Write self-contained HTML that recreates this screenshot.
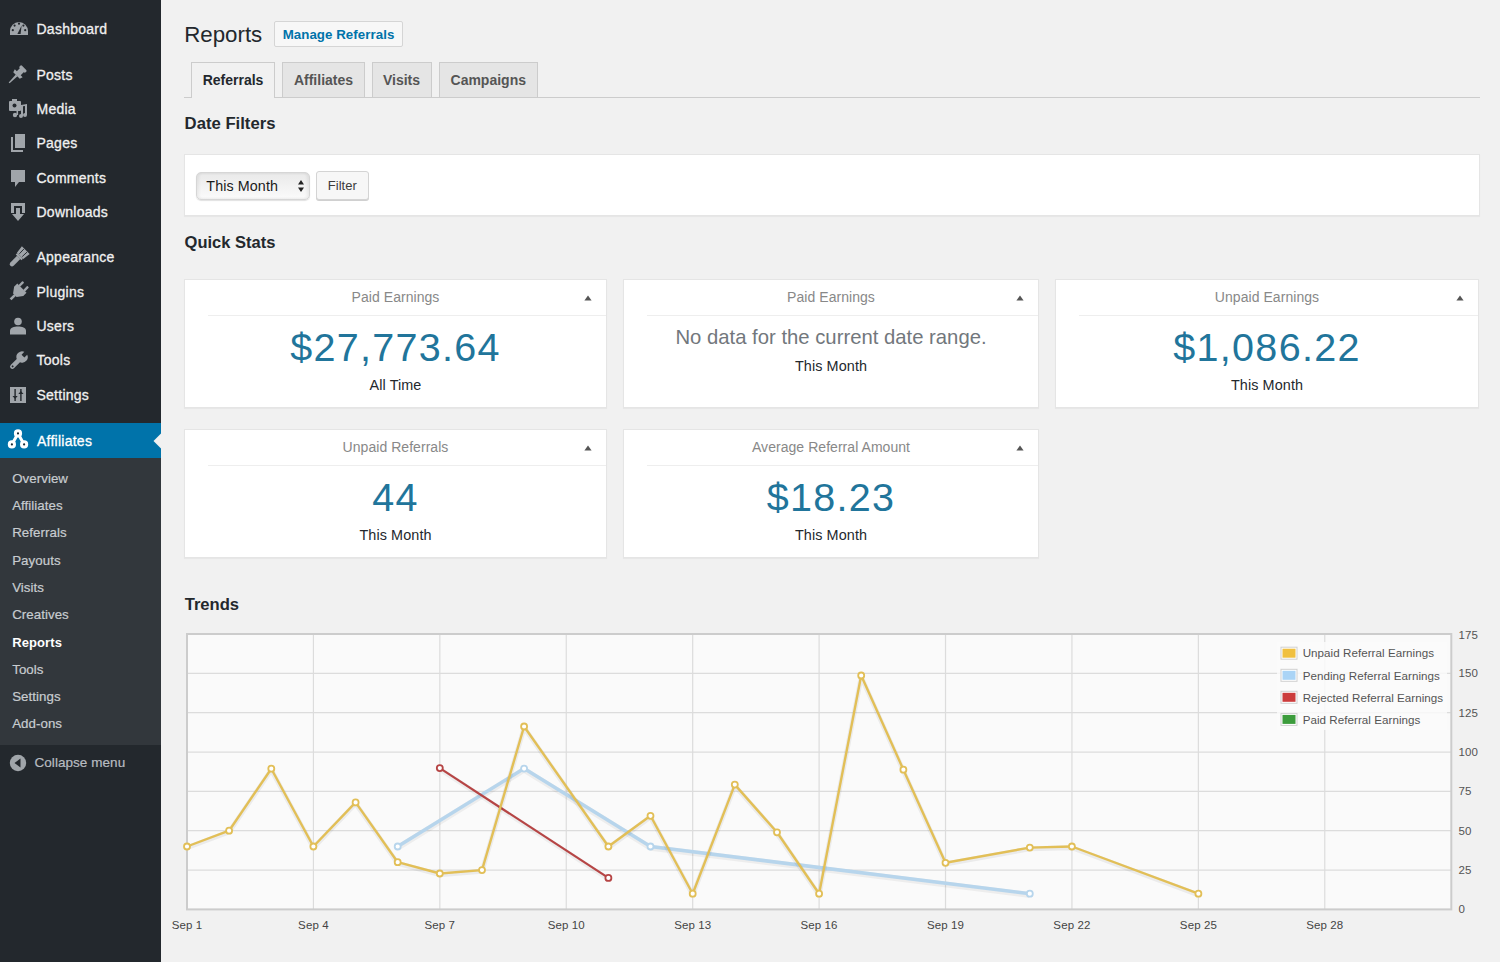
<!DOCTYPE html>
<html><head><meta charset="utf-8"><title>Reports</title>
<style>
html,body{margin:0;padding:0;}
body{width:1500px;height:962px;overflow:hidden;position:relative;background:#f1f1f1;font-family:"Liberation Sans", sans-serif;}
.t{position:absolute;white-space:nowrap;}
.b{position:absolute;}
</style></head><body>
<div class="b" style="left:0px;top:0px;width:161px;height:962px;background:#23282d;"></div>
<div class="b" style="left:0px;top:423px;width:161px;height:35px;background:#0073aa;"></div>
<div class="b" style="left:0px;top:458px;width:161px;height:287px;background:#32373c;"></div>
<div class="t" style="left:36.5px;top:22.1px;font-size:14px;line-height:14px;color:#f0f0f0;letter-spacing:0.25px;-webkit-text-stroke:0.3px #f0f0f0;">Dashboard</div>
<div class="t" style="left:36.5px;top:67.6px;font-size:14px;line-height:14px;color:#f0f0f0;letter-spacing:0.25px;-webkit-text-stroke:0.3px #f0f0f0;">Posts</div>
<div class="t" style="left:36.5px;top:101.9px;font-size:14px;line-height:14px;color:#f0f0f0;letter-spacing:0.25px;-webkit-text-stroke:0.3px #f0f0f0;">Media</div>
<div class="t" style="left:36.5px;top:136.3px;font-size:14px;line-height:14px;color:#f0f0f0;letter-spacing:0.25px;-webkit-text-stroke:0.3px #f0f0f0;">Pages</div>
<div class="t" style="left:36.5px;top:170.6px;font-size:14px;line-height:14px;color:#f0f0f0;letter-spacing:0.25px;-webkit-text-stroke:0.3px #f0f0f0;">Comments</div>
<div class="t" style="left:36.5px;top:204.9px;font-size:14px;line-height:14px;color:#f0f0f0;letter-spacing:0.25px;-webkit-text-stroke:0.3px #f0f0f0;">Downloads</div>
<div class="t" style="left:36.5px;top:250.3px;font-size:14px;line-height:14px;color:#f0f0f0;letter-spacing:0.25px;-webkit-text-stroke:0.3px #f0f0f0;">Appearance</div>
<div class="t" style="left:36.5px;top:284.6px;font-size:14px;line-height:14px;color:#f0f0f0;letter-spacing:0.25px;-webkit-text-stroke:0.3px #f0f0f0;">Plugins</div>
<div class="t" style="left:36.5px;top:318.9px;font-size:14px;line-height:14px;color:#f0f0f0;letter-spacing:0.25px;-webkit-text-stroke:0.3px #f0f0f0;">Users</div>
<div class="t" style="left:36.5px;top:353.2px;font-size:14px;line-height:14px;color:#f0f0f0;letter-spacing:0.25px;-webkit-text-stroke:0.3px #f0f0f0;">Tools</div>
<div class="t" style="left:36.5px;top:387.6px;font-size:14px;line-height:14px;color:#f0f0f0;letter-spacing:0.25px;-webkit-text-stroke:0.3px #f0f0f0;">Settings</div>
<div class="t" style="left:37.0px;top:433.9px;font-size:14px;line-height:14px;color:#ffffff;letter-spacing:0.25px;-webkit-text-stroke:0.3px #fff;">Affiliates</div>
<svg class="b" style="left:4.699999999999999px;top:15px" width="28" height="28" viewBox="-14 -14 28 28"><path d="M-9 6 L-9 2 A9 9 0 0 1 9 2 L9 6 Z" fill="#a0a5aa"/><path d="M-1.6 5 L2.6 -3.5 L1.6 5 Z" fill="#23282d"/><circle cx="-6.2" cy="1.2" r="1.1" fill="#23282d"/><circle cx="-4.4" cy="-3.4" r="1.1" fill="#23282d"/><circle cx="0" cy="-5.3" r="1.1" fill="#23282d"/><circle cx="4.4" cy="-3.4" r="1.1" fill="#23282d"/><circle cx="6.2" cy="1.2" r="1.1" fill="#23282d"/></svg>
<svg class="b" style="left:2.1999999999999993px;top:62.2px" width="28" height="28" viewBox="-14 -14 28 28"><g transform="rotate(45) scale(0.92)"><rect x="-4.6" y="-12.5" width="9.2" height="3.6" rx="1.4" fill="#a0a5aa"/><rect x="-3" y="-10" width="6" height="6.5" fill="#a0a5aa"/><path d="M-6 -4.2 L6 -4.2 L5 -0.8 L-5 -0.8 Z" fill="#a0a5aa"/><path d="M-1.3 -1 L1.3 -1 L0.7 10.5 L-0.7 10.5 Z" fill="#a0a5aa"/></g></svg>
<svg class="b" style="left:4.300000000000001px;top:94px" width="28" height="28" viewBox="-14 -14 28 28"><rect x="-9" y="-7" width="12" height="10" rx="1" fill="#a0a5aa"/><rect x="-6" y="-9" width="5" height="3" fill="#a0a5aa"/><circle cx="-3.5" cy="-2.5" r="2" fill="#23282d"/><path d="M3 -3 L9 -4 L9 7 A2 2 0 1 1 7 5 L7 -2 L5 -1.7 L5 8 A2 2 0 1 1 3 6 Z" fill="#a0a5aa"/><circle cx="-3" cy="7" r="2.2" fill="#a0a5aa"/><rect x="-1.5" y="1" width="1.6" height="6" fill="#a0a5aa"/></svg>
<svg class="b" style="left:3.6000000000000014px;top:129.4px" width="28" height="28" viewBox="-14 -14 28 28"><path d="M-3 -9 L7 -9 L7 5 L-3 5 Z" fill="#a0a5aa"/><path d="M-7 -6 L-5 -6 L-5 7 L5 7 L5 9 L-7 9 Z" fill="#a0a5aa"/></svg>
<svg class="b" style="left:3.8000000000000007px;top:164px" width="28" height="28" viewBox="-14 -14 28 28"><path d="M-7 -8 L7 -8 L7 4 L1 4 L-3 9 L-3 4 L-7 4 Z" fill="#a0a5aa"/></svg>
<svg class="b" style="left:4px;top:198px" width="28" height="28" viewBox="-14 -14 28 28"><path d="M-7 -9 L7 -9 L7 1 L4 1 L4 -6 L-4 -6 L-4 1 L-7 1 Z" fill="#a0a5aa"/><path d="M-2 -4 L2 -4 L2 2 L6 2 L0 9 L-6 2 L-2 2 Z" fill="#a0a5aa"/></svg>
<svg class="b" style="left:4px;top:243.5px" width="28" height="28" viewBox="-14 -14 28 28"><g transform="rotate(45)"><path d="M-5.5 -11 L5.5 -11 L4.5 -3 L-4.5 -3 Z" fill="#a0a5aa"/><path d="M-2.2 -10.5 L-2 -4 M2.2 -10.5 L2 -4" stroke="#23282d" stroke-width="0.9"/><rect x="-4" y="-3" width="8" height="2.2" fill="#a0a5aa"/><path d="M-2.3 -1 L2.3 -1 L2.3 8.5 A2.3 2.3 0 0 1 -2.3 8.5 Z" fill="#a0a5aa"/></g></svg>
<svg class="b" style="left:4px;top:277.5px" width="28" height="28" viewBox="-14 -14 28 28"><g transform="rotate(45)"><rect x="-4.6" y="-11" width="2.4" height="6" rx="0.8" fill="#a0a5aa"/><rect x="2.2" y="-11" width="2.4" height="6" rx="0.8" fill="#a0a5aa"/><path d="M-6.5 -5.5 L6.5 -5.5 L6.5 -1 L2.5 4.5 L-2.5 4.5 L-6.5 -1 Z" fill="#a0a5aa"/><rect x="-1.3" y="4" width="2.6" height="6.5" fill="#a0a5aa"/></g></svg>
<svg class="b" style="left:4px;top:312px" width="28" height="28" viewBox="-14 -14 28 28"><circle cx="0" cy="-4.5" r="3.8" fill="#a0a5aa"/><path d="M-8 8.5 L-8 5 C-8 1.5 -4 0.5 0 0.5 C4 0.5 8 1.5 8 5 L8 8.5 Z" fill="#a0a5aa"/></svg>
<svg class="b" style="left:4px;top:346.5px" width="28" height="28" viewBox="-14 -14 28 28"><g transform="rotate(45)"><path d="M-5.5 -6 A5.5 5.5 0 0 1 -2 -11 L-2 -7 L2 -7 L2 -11 A5.5 5.5 0 0 1 3 -1 L2.3 -0.5 L2.3 8 A2.3 2.3 0 0 1 -2.3 8 L-2.3 -0.5 A5.5 5.5 0 0 1 -5.5 -6 Z" fill="#a0a5aa"/><circle cx="0" cy="7.6" r="1" fill="#23282d"/></g></svg>
<svg class="b" style="left:4px;top:381px" width="28" height="28" viewBox="-14 -14 28 28"><rect x="-8" y="-8" width="16" height="16" fill="#a0a5aa"/><rect x="-3.6" y="-6" width="1.4" height="12" fill="#23282d"/><rect x="2.2" y="-6" width="1.4" height="12" fill="#23282d"/><path d="M-5.5 1 L-0.3 1 L-2.9 4 Z" fill="#23282d"/><path d="M0.3 -1 L5.5 -1 L2.9 -4 Z" fill="#23282d"/></svg>
<svg class="b" style="left:4.199999999999999px;top:425.2px" width="28" height="28" viewBox="-14 -14 28 28"><g fill="none" stroke="#ffffff"><path d="M0 -5.6 L-6.1 5.4 M0 -5.6 L6.1 5.4" stroke-width="3"/><circle cx="0" cy="-5.6" r="2.6" stroke-width="3" fill="#1a2a35"/><circle cx="-6.1" cy="5.4" r="2.6" stroke-width="3" fill="#1a2a35"/><circle cx="6.1" cy="5.4" r="2.6" stroke-width="3" fill="#1a2a35"/></g></svg>
<svg class="b" style="left:152px;top:431px" width="10" height="20" viewBox="0 0 10 20"><path d="M10 1.5 L1.5 10 L10 18.5 Z" fill="#f1f1f1"/></svg>
<div class="t" style="left:12.2px;top:471.7px;font-size:13.3px;line-height:13.3px;color:#c8ccd0;letter-spacing:0.05px;-webkit-text-stroke:0.2px #c8ccd0;">Overview</div>
<div class="t" style="left:12.2px;top:499.0px;font-size:13.3px;line-height:13.3px;color:#c8ccd0;letter-spacing:0.05px;-webkit-text-stroke:0.2px #c8ccd0;">Affiliates</div>
<div class="t" style="left:12.2px;top:526.3px;font-size:13.3px;line-height:13.3px;color:#c8ccd0;letter-spacing:0.05px;-webkit-text-stroke:0.2px #c8ccd0;">Referrals</div>
<div class="t" style="left:12.2px;top:553.6px;font-size:13.3px;line-height:13.3px;color:#c8ccd0;letter-spacing:0.05px;-webkit-text-stroke:0.2px #c8ccd0;">Payouts</div>
<div class="t" style="left:12.2px;top:580.8px;font-size:13.3px;line-height:13.3px;color:#c8ccd0;letter-spacing:0.05px;-webkit-text-stroke:0.2px #c8ccd0;">Visits</div>
<div class="t" style="left:12.2px;top:608.1px;font-size:13.3px;line-height:13.3px;color:#c8ccd0;letter-spacing:0.05px;-webkit-text-stroke:0.2px #c8ccd0;">Creatives</div>
<div class="t" style="left:12.2px;top:635.6px;font-size:13px;line-height:13px;color:#ffffff;font-weight:700;letter-spacing:0.1px;">Reports</div>
<div class="t" style="left:12.2px;top:662.6px;font-size:13.3px;line-height:13.3px;color:#c8ccd0;letter-spacing:0.05px;-webkit-text-stroke:0.2px #c8ccd0;">Tools</div>
<div class="t" style="left:12.2px;top:689.9px;font-size:13.3px;line-height:13.3px;color:#c8ccd0;letter-spacing:0.05px;-webkit-text-stroke:0.2px #c8ccd0;">Settings</div>
<div class="t" style="left:12.2px;top:717.2px;font-size:13.3px;line-height:13.3px;color:#c8ccd0;letter-spacing:0.05px;-webkit-text-stroke:0.2px #c8ccd0;">Add-ons</div>
<svg class="b" style="left:8px;top:753px" width="20" height="20" viewBox="-10 -10 20 20"><circle cx="0" cy="0" r="8.2" fill="#a0a5aa"/><path d="M2.5 -4.5 L-3.5 0 L2.5 4.5 Z" fill="#23282d"/></svg>
<div class="t" style="left:34.5px;top:756.1px;font-size:13.5px;line-height:13.5px;color:#b8bcc0;letter-spacing:0.05px;-webkit-text-stroke:0.2px #b8bcc0;">Collapse menu</div>
<div class="t" style="left:184.2px;top:23.9px;font-size:22.3px;line-height:22.3px;color:#23282d;">Reports</div>
<div class="b" style="left:274px;top:21px;width:129px;height:26px;background:#f7f7f7;border:1px solid #d5d5d5;box-sizing:border-box;border-radius:2px;"></div>
<div class="t" style="left:268.5px;width:140px;text-align:center;top:28.3px;font-size:13.3px;line-height:13.3px;color:#0073aa;font-weight:700;letter-spacing:0.05px;">Manage Referrals</div>
<div class="b" style="left:184px;top:96.5px;width:1296px;height:1px;background:#cccccc;"></div>
<div class="b" style="left:191px;top:62px;width:84px;height:36px;background:#f1f1f1;border:1px solid #cccccc;border-bottom:none;box-sizing:border-box;"></div>
<div class="t" style="left:191.0px;width:84px;text-align:center;top:73.0px;font-size:14px;line-height:14px;color:#23282d;font-weight:700;">Referrals</div>
<div class="b" style="left:282px;top:62px;width:83px;height:35px;background:#e5e5e5;border:1px solid #cccccc;border-bottom:none;box-sizing:border-box;"></div>
<div class="t" style="left:282.0px;width:83px;text-align:center;top:73.0px;font-size:14px;line-height:14px;color:#555;font-weight:700;">Affiliates</div>
<div class="b" style="left:371.5px;top:62px;width:60px;height:35px;background:#e5e5e5;border:1px solid #cccccc;border-bottom:none;box-sizing:border-box;"></div>
<div class="t" style="left:371.5px;width:60px;text-align:center;top:73.0px;font-size:14px;line-height:14px;color:#555;font-weight:700;">Visits</div>
<div class="b" style="left:439px;top:62px;width:98.5px;height:35px;background:#e5e5e5;border:1px solid #cccccc;border-bottom:none;box-sizing:border-box;"></div>
<div class="t" style="left:439.0px;width:98.5px;text-align:center;top:73.0px;font-size:14px;line-height:14px;color:#555;font-weight:700;">Campaigns</div>
<div class="t" style="left:184.6px;top:116.4px;font-size:16.7px;line-height:16.7px;color:#23282d;font-weight:700;">Date Filters</div>
<div class="b" style="left:184px;top:153.5px;width:1295.5px;height:62px;background:#fff;border:1px solid #e5e5e5;box-sizing:border-box;box-shadow:0 1px 1px rgba(0,0,0,.04);"></div>
<div class="b" style="left:196px;top:172px;width:114px;height:27.5px;background:linear-gradient(#e9e9e9,#fbfbfb);border:1px solid #d6d6d6;box-sizing:border-box;border-radius:5px;box-shadow:inset 2px 0 3px rgba(0,0,0,.06),inset -2px 0 3px rgba(0,0,0,.06),0 1px 1px rgba(0,0,0,.12);"></div>
<div class="t" style="left:206.3px;top:178.9px;font-size:14.3px;line-height:14.3px;color:#1a1a1a;letter-spacing:0.1px;">This Month</div>
<svg class="b" style="left:296px;top:178px" width="10" height="16" viewBox="0 0 10 16"><path d="M5 2 L8 6.5 L2 6.5 Z M5 14 L8 9.5 L2 9.5 Z" fill="#222"/></svg>
<div class="b" style="left:316px;top:171px;width:52.5px;height:28.5px;background:#f7f7f7;border:1px solid #d4d4d4;box-sizing:border-box;border-radius:3px;box-shadow:0 1px 0 #d0d0d0;"></div>
<div class="t" style="left:316.3px;width:52px;text-align:center;top:179.0px;font-size:13px;line-height:13px;color:#3c3c3c;">Filter</div>
<div class="t" style="left:184.6px;top:234.0px;font-size:16.5px;line-height:16.5px;color:#23282d;font-weight:700;">Quick Stats</div>
<div class="b" style="left:184px;top:279px;width:423px;height:129px;background:#fff;border:1px solid #e5e5e5;box-sizing:border-box;box-shadow:0 1px 1px rgba(0,0,0,.04);"></div>
<div class="t" style="left:184.0px;width:423px;text-align:center;top:290.4px;font-size:14px;line-height:14px;color:#888888;letter-spacing:0.05px;">Paid Earnings</div>
<div class="b" style="left:208px;top:315px;width:398px;height:1px;background:#eeeeee;"></div>
<svg class="b" style="left:583px;top:293px" width="10" height="10" viewBox="-5 -5 10 10"><path d="M0 -2.6 L3.6 2.6 L-3.6 2.6 Z" fill="#555"/></svg>
<div class="t" style="left:184.0px;width:423px;text-align:center;top:327.8px;font-size:39.5px;line-height:39.5px;color:#21759b;letter-spacing:1.3px;">$27,773.64</div>
<div class="t" style="left:184.0px;width:423px;text-align:center;top:378.1px;font-size:14.4px;line-height:14.4px;color:#23282d;letter-spacing:0.1px;">All Time</div>
<div class="b" style="left:623px;top:279px;width:416px;height:129px;background:#fff;border:1px solid #e5e5e5;box-sizing:border-box;box-shadow:0 1px 1px rgba(0,0,0,.04);"></div>
<div class="t" style="left:623.0px;width:416px;text-align:center;top:290.4px;font-size:14px;line-height:14px;color:#888888;letter-spacing:0.05px;">Paid Earnings</div>
<div class="b" style="left:647px;top:315px;width:391px;height:1px;background:#eeeeee;"></div>
<svg class="b" style="left:1015px;top:293px" width="10" height="10" viewBox="-5 -5 10 10"><path d="M0 -2.6 L3.6 2.6 L-3.6 2.6 Z" fill="#555"/></svg>
<div class="t" style="left:623.0px;width:416px;text-align:center;top:327.0px;font-size:20.3px;line-height:20.3px;color:#72777c;">No data for the current date range.</div>
<div class="t" style="left:623.0px;width:416px;text-align:center;top:359.0px;font-size:14.4px;line-height:14.4px;color:#23282d;letter-spacing:0.1px;">This Month</div>
<div class="b" style="left:1055px;top:279px;width:424px;height:129px;background:#fff;border:1px solid #e5e5e5;box-sizing:border-box;box-shadow:0 1px 1px rgba(0,0,0,.04);"></div>
<div class="t" style="left:1055.0px;width:424px;text-align:center;top:290.4px;font-size:14px;line-height:14px;color:#888888;letter-spacing:0.05px;">Unpaid Earnings</div>
<div class="b" style="left:1079px;top:315px;width:399px;height:1px;background:#eeeeee;"></div>
<svg class="b" style="left:1455px;top:293px" width="10" height="10" viewBox="-5 -5 10 10"><path d="M0 -2.6 L3.6 2.6 L-3.6 2.6 Z" fill="#555"/></svg>
<div class="t" style="left:1055.0px;width:424px;text-align:center;top:327.8px;font-size:39.5px;line-height:39.5px;color:#21759b;letter-spacing:1.3px;">$1,086.22</div>
<div class="t" style="left:1055.0px;width:424px;text-align:center;top:378.1px;font-size:14.4px;line-height:14.4px;color:#23282d;letter-spacing:0.1px;">This Month</div>
<div class="b" style="left:184px;top:429px;width:423px;height:129px;background:#fff;border:1px solid #e5e5e5;box-sizing:border-box;box-shadow:0 1px 1px rgba(0,0,0,.04);"></div>
<div class="t" style="left:184.0px;width:423px;text-align:center;top:440.4px;font-size:14px;line-height:14px;color:#888888;letter-spacing:0.05px;">Unpaid Referrals</div>
<div class="b" style="left:208px;top:465px;width:398px;height:1px;background:#eeeeee;"></div>
<svg class="b" style="left:583px;top:443px" width="10" height="10" viewBox="-5 -5 10 10"><path d="M0 -2.6 L3.6 2.6 L-3.6 2.6 Z" fill="#555"/></svg>
<div class="t" style="left:184.0px;width:423px;text-align:center;top:477.8px;font-size:39.5px;line-height:39.5px;color:#21759b;letter-spacing:1.3px;">44</div>
<div class="t" style="left:184.0px;width:423px;text-align:center;top:528.1px;font-size:14.4px;line-height:14.4px;color:#23282d;letter-spacing:0.1px;">This Month</div>
<div class="b" style="left:623px;top:429px;width:416px;height:129px;background:#fff;border:1px solid #e5e5e5;box-sizing:border-box;box-shadow:0 1px 1px rgba(0,0,0,.04);"></div>
<div class="t" style="left:623.0px;width:416px;text-align:center;top:440.4px;font-size:14px;line-height:14px;color:#888888;letter-spacing:0.05px;">Average Referral Amount</div>
<div class="b" style="left:647px;top:465px;width:391px;height:1px;background:#eeeeee;"></div>
<svg class="b" style="left:1015px;top:443px" width="10" height="10" viewBox="-5 -5 10 10"><path d="M0 -2.6 L3.6 2.6 L-3.6 2.6 Z" fill="#555"/></svg>
<div class="t" style="left:623.0px;width:416px;text-align:center;top:477.8px;font-size:39.5px;line-height:39.5px;color:#21759b;letter-spacing:1.3px;">$18.23</div>
<div class="t" style="left:623.0px;width:416px;text-align:center;top:528.1px;font-size:14.4px;line-height:14.4px;color:#23282d;letter-spacing:0.1px;">This Month</div>
<div class="t" style="left:184.7px;top:597.1px;font-size:16.6px;line-height:16.6px;color:#23282d;font-weight:700;">Trends</div>
<svg class="b" style="left:0;top:0" width="1500" height="962"><rect x="187.0" y="634.0" width="1264.2" height="275.4" fill="#fafafa"/><line x1="187.0" x2="1451.3" y1="870.06" y2="870.06" stroke="#dcdcdc" stroke-width="1.2"/><line x1="187.0" x2="1451.3" y1="830.71" y2="830.71" stroke="#dcdcdc" stroke-width="1.2"/><line x1="187.0" x2="1451.3" y1="791.37" y2="791.37" stroke="#dcdcdc" stroke-width="1.2"/><line x1="187.0" x2="1451.3" y1="752.03" y2="752.03" stroke="#dcdcdc" stroke-width="1.2"/><line x1="187.0" x2="1451.3" y1="712.69" y2="712.69" stroke="#dcdcdc" stroke-width="1.2"/><line x1="187.0" x2="1451.3" y1="673.34" y2="673.34" stroke="#dcdcdc" stroke-width="1.2"/><line x1="313.42" x2="313.42" y1="634.0" y2="909.4" stroke="#dcdcdc" stroke-width="1.2"/><line x1="439.84" x2="439.84" y1="634.0" y2="909.4" stroke="#dcdcdc" stroke-width="1.2"/><line x1="566.26" x2="566.26" y1="634.0" y2="909.4" stroke="#dcdcdc" stroke-width="1.2"/><line x1="692.68" x2="692.68" y1="634.0" y2="909.4" stroke="#dcdcdc" stroke-width="1.2"/><line x1="819.10" x2="819.10" y1="634.0" y2="909.4" stroke="#dcdcdc" stroke-width="1.2"/><line x1="945.52" x2="945.52" y1="634.0" y2="909.4" stroke="#dcdcdc" stroke-width="1.2"/><line x1="1071.94" x2="1071.94" y1="634.0" y2="909.4" stroke="#dcdcdc" stroke-width="1.2"/><line x1="1198.36" x2="1198.36" y1="634.0" y2="909.4" stroke="#dcdcdc" stroke-width="1.2"/><line x1="1324.78" x2="1324.78" y1="634.0" y2="909.4" stroke="#dcdcdc" stroke-width="1.2"/><rect x="187.0" y="634.0" width="1264.3" height="275.4" fill="none" stroke="#cccccc" stroke-width="2"/><polyline points="397.7,846.5 524.1,768.6 650.5,846.5 1029.8,893.7" fill="none" stroke="rgba(0,0,0,0.05)" stroke-width="6.0" stroke-linejoin="round" transform="translate(0,1.2)"/><polyline points="397.7,846.5 524.1,768.6 650.5,846.5 1029.8,893.7" fill="none" stroke="#b7d5ec" stroke-width="3.5" stroke-linejoin="round"/><circle cx="397.7" cy="846.5" r="3" fill="#ffffff" stroke="#b7d5ec" stroke-width="1.8"/><circle cx="524.1" cy="768.6" r="3" fill="#ffffff" stroke="#b7d5ec" stroke-width="1.8"/><circle cx="650.5" cy="846.5" r="3" fill="#ffffff" stroke="#b7d5ec" stroke-width="1.8"/><circle cx="1029.8" cy="893.7" r="3" fill="#ffffff" stroke="#b7d5ec" stroke-width="1.8"/><polyline points="439.8,768.1 608.4,877.9" fill="none" stroke="rgba(0,0,0,0.05)" stroke-width="4.7" stroke-linejoin="round" transform="translate(0,1.2)"/><polyline points="439.8,768.1 608.4,877.9" fill="none" stroke="#b64545" stroke-width="2.2" stroke-linejoin="round"/><circle cx="439.8" cy="768.1" r="3" fill="#ffffff" stroke="#b64545" stroke-width="1.8"/><circle cx="608.4" cy="877.9" r="3" fill="#ffffff" stroke="#b64545" stroke-width="1.8"/><polyline points="187.0,846.5 229.1,830.7 271.3,768.7 313.4,846.5 355.6,802.4 397.7,862.2 439.8,873.5 482.0,870.1 524.1,726.5 608.4,846.5 650.5,815.8 692.7,893.7 734.8,784.6 777.0,832.3 819.1,893.7 861.2,675.5 903.4,769.7 945.5,862.8 1029.8,847.6 1071.9,846.5 1198.4,893.7" fill="none" stroke="rgba(0,0,0,0.06)" stroke-width="4.9" stroke-linejoin="round" transform="translate(0,1.2)"/><polyline points="187.0,846.5 229.1,830.7 271.3,768.7 313.4,846.5 355.6,802.4 397.7,862.2 439.8,873.5 482.0,870.1 524.1,726.5 608.4,846.5 650.5,815.8 692.7,893.7 734.8,784.6 777.0,832.3 819.1,893.7 861.2,675.5 903.4,769.7 945.5,862.8 1029.8,847.6 1071.9,846.5 1198.4,893.7" fill="none" stroke="#e2bf57" stroke-width="2.4" stroke-linejoin="round"/><circle cx="187.0" cy="846.5" r="3" fill="#ffffff" stroke="#e2bf57" stroke-width="1.8"/><circle cx="229.1" cy="830.7" r="3" fill="#ffffff" stroke="#e2bf57" stroke-width="1.8"/><circle cx="271.3" cy="768.7" r="3" fill="#ffffff" stroke="#e2bf57" stroke-width="1.8"/><circle cx="313.4" cy="846.5" r="3" fill="#ffffff" stroke="#e2bf57" stroke-width="1.8"/><circle cx="355.6" cy="802.4" r="3" fill="#ffffff" stroke="#e2bf57" stroke-width="1.8"/><circle cx="397.7" cy="862.2" r="3" fill="#ffffff" stroke="#e2bf57" stroke-width="1.8"/><circle cx="439.8" cy="873.5" r="3" fill="#ffffff" stroke="#e2bf57" stroke-width="1.8"/><circle cx="482.0" cy="870.1" r="3" fill="#ffffff" stroke="#e2bf57" stroke-width="1.8"/><circle cx="524.1" cy="726.5" r="3" fill="#ffffff" stroke="#e2bf57" stroke-width="1.8"/><circle cx="608.4" cy="846.5" r="3" fill="#ffffff" stroke="#e2bf57" stroke-width="1.8"/><circle cx="650.5" cy="815.8" r="3" fill="#ffffff" stroke="#e2bf57" stroke-width="1.8"/><circle cx="692.7" cy="893.7" r="3" fill="#ffffff" stroke="#e2bf57" stroke-width="1.8"/><circle cx="734.8" cy="784.6" r="3" fill="#ffffff" stroke="#e2bf57" stroke-width="1.8"/><circle cx="777.0" cy="832.3" r="3" fill="#ffffff" stroke="#e2bf57" stroke-width="1.8"/><circle cx="819.1" cy="893.7" r="3" fill="#ffffff" stroke="#e2bf57" stroke-width="1.8"/><circle cx="861.2" cy="675.5" r="3" fill="#ffffff" stroke="#e2bf57" stroke-width="1.8"/><circle cx="903.4" cy="769.7" r="3" fill="#ffffff" stroke="#e2bf57" stroke-width="1.8"/><circle cx="945.5" cy="862.8" r="3" fill="#ffffff" stroke="#e2bf57" stroke-width="1.8"/><circle cx="1029.8" cy="847.6" r="3" fill="#ffffff" stroke="#e2bf57" stroke-width="1.8"/><circle cx="1071.9" cy="846.5" r="3" fill="#ffffff" stroke="#e2bf57" stroke-width="1.8"/><circle cx="1198.4" cy="893.7" r="3" fill="#ffffff" stroke="#e2bf57" stroke-width="1.8"/><rect x="1277" y="642" width="170" height="88" fill="#fafafa" fill-opacity="0.85"/><rect x="1281" y="647.2" width="16" height="12" fill="#ffffff" stroke="#d0d0d0" stroke-width="1"/><rect x="1282.5" y="648.7" width="13" height="9" fill="#f0c040"/><rect x="1281" y="669.3" width="16" height="12" fill="#ffffff" stroke="#d0d0d0" stroke-width="1"/><rect x="1282.5" y="670.8" width="13" height="9" fill="#aad4f6"/><rect x="1281" y="691.3" width="16" height="12" fill="#ffffff" stroke="#d0d0d0" stroke-width="1"/><rect x="1282.5" y="692.8" width="13" height="9" fill="#cc3c3c"/><rect x="1281" y="713.4" width="16" height="12" fill="#ffffff" stroke="#d0d0d0" stroke-width="1"/><rect x="1282.5" y="714.9" width="13" height="9" fill="#3c9c3c"/></svg>
<div class="t" style="left:1302.7px;top:647.4px;font-size:11.6px;line-height:11.6px;color:#545454;letter-spacing:0.05px;">Unpaid Referral Earnings</div>
<div class="t" style="left:1302.7px;top:669.5px;font-size:11.6px;line-height:11.6px;color:#545454;letter-spacing:0.05px;">Pending Referral Earnings</div>
<div class="t" style="left:1302.7px;top:691.5px;font-size:11.6px;line-height:11.6px;color:#545454;letter-spacing:0.05px;">Rejected Referral Earnings</div>
<div class="t" style="left:1302.7px;top:713.6px;font-size:11.6px;line-height:11.6px;color:#545454;letter-spacing:0.05px;">Paid Referral Earnings</div>
<div class="t" style="left:1458.4px;top:904.4px;font-size:11.5px;line-height:11.5px;color:#545454;letter-spacing:0.1px;">0</div>
<div class="t" style="left:1458.4px;top:865.0px;font-size:11.5px;line-height:11.5px;color:#545454;letter-spacing:0.1px;">25</div>
<div class="t" style="left:1458.4px;top:825.7px;font-size:11.5px;line-height:11.5px;color:#545454;letter-spacing:0.1px;">50</div>
<div class="t" style="left:1458.4px;top:786.3px;font-size:11.5px;line-height:11.5px;color:#545454;letter-spacing:0.1px;">75</div>
<div class="t" style="left:1458.4px;top:747.0px;font-size:11.5px;line-height:11.5px;color:#545454;letter-spacing:0.1px;">100</div>
<div class="t" style="left:1458.4px;top:707.7px;font-size:11.5px;line-height:11.5px;color:#545454;letter-spacing:0.1px;">125</div>
<div class="t" style="left:1458.4px;top:668.3px;font-size:11.5px;line-height:11.5px;color:#545454;letter-spacing:0.1px;">150</div>
<div class="t" style="left:1458.4px;top:630.3px;font-size:11.5px;line-height:11.5px;color:#545454;letter-spacing:0.1px;">175</div>
<div class="t" style="left:157.0px;width:60px;text-align:center;top:919.8px;font-size:11.5px;line-height:11.5px;color:#444444;letter-spacing:0.1px;">Sep 1</div>
<div class="t" style="left:283.4px;width:60px;text-align:center;top:919.8px;font-size:11.5px;line-height:11.5px;color:#444444;letter-spacing:0.1px;">Sep 4</div>
<div class="t" style="left:409.8px;width:60px;text-align:center;top:919.8px;font-size:11.5px;line-height:11.5px;color:#444444;letter-spacing:0.1px;">Sep 7</div>
<div class="t" style="left:536.3px;width:60px;text-align:center;top:919.8px;font-size:11.5px;line-height:11.5px;color:#444444;letter-spacing:0.1px;">Sep 10</div>
<div class="t" style="left:662.7px;width:60px;text-align:center;top:919.8px;font-size:11.5px;line-height:11.5px;color:#444444;letter-spacing:0.1px;">Sep 13</div>
<div class="t" style="left:789.1px;width:60px;text-align:center;top:919.8px;font-size:11.5px;line-height:11.5px;color:#444444;letter-spacing:0.1px;">Sep 16</div>
<div class="t" style="left:915.5px;width:60px;text-align:center;top:919.8px;font-size:11.5px;line-height:11.5px;color:#444444;letter-spacing:0.1px;">Sep 19</div>
<div class="t" style="left:1041.9px;width:60px;text-align:center;top:919.8px;font-size:11.5px;line-height:11.5px;color:#444444;letter-spacing:0.1px;">Sep 22</div>
<div class="t" style="left:1168.4px;width:60px;text-align:center;top:919.8px;font-size:11.5px;line-height:11.5px;color:#444444;letter-spacing:0.1px;">Sep 25</div>
<div class="t" style="left:1294.8px;width:60px;text-align:center;top:919.8px;font-size:11.5px;line-height:11.5px;color:#444444;letter-spacing:0.1px;">Sep 28</div>

</body></html>
